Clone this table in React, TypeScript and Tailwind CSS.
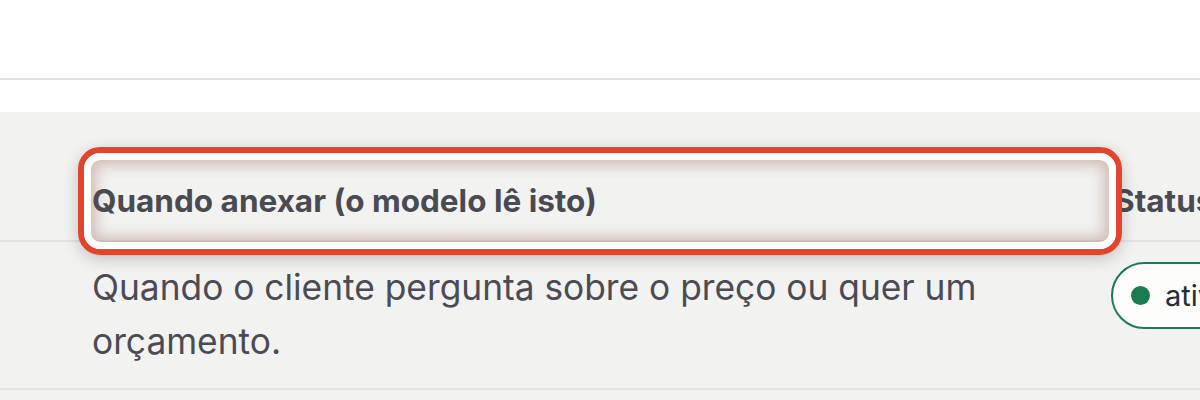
export default function App() {
  return (
    <div className="relative flex h-[400px] w-[1200px] flex-col overflow-hidden bg-white font-['Inter',sans-serif]">
      <div className="h-[80px] shrink-0 border-b-2 border-[#e0e0e0]" />
      <div className="h-[32px] shrink-0" />

      <div className="flex-1 bg-[#f2f2f0]">
        {/* header row */}
        <div className="grid h-[130px] grid-cols-[1111px_1fr] border-b-2 border-[#e3e3e1]">
          <div className="flex items-end pb-[16px] pl-[92px] text-[31.5px] font-bold text-[#4a4a52]">
            Quando anexar (o modelo lê isto)
          </div>
          <div className="flex items-end pb-[16px] pl-[3px] text-[31.5px] font-bold text-[#4a4a52]">
            Status
          </div>
        </div>

        {/* body row */}
        <div className="grid grid-cols-[1111px_1fr] border-b-2 border-[#e3e3e1]">
          <div className="pb-[19px] pl-[92px] pr-[100px] pt-[19px] text-[35.3px] leading-[54px] text-[#4b4b55]">
            Quando o cliente pergunta sobre o preço ou quer um orçamento.
          </div>
          <div className="pt-[20px]">
            <span className="inline-flex h-[67px] items-center gap-[15px] rounded-full border-2 border-[#1f7a4f] bg-[#fdfdfc] pl-[18px] pr-[26px] text-[29px] text-[#2b2b33]">
              <span className="h-[19px] w-[19px] rounded-full bg-[#1a7a50]" />
              ativo
            </span>
          </div>
        </div>
      </div>

      {/* highlight annotation */}
      <div className="absolute left-[78px] top-[147px] h-[108px] w-[1044px] rounded-[22px] border-[6px] border-[#e2452b] shadow-[0_4px_16px_rgba(0,0,0,0.2)]">
        <div className="h-full w-full rounded-[16px] border-[7px] border-white shadow-[inset_0_0_14px_5px_rgba(140,70,60,0.32)]" />
      </div>
    </div>
  );
}
